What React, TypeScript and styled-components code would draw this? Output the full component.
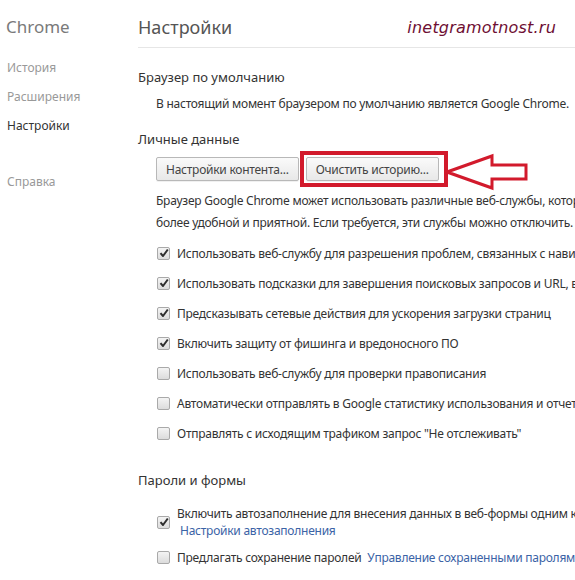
import React from 'react'
import styled, { createGlobalStyle } from 'styled-components'

const GlobalStyle = createGlobalStyle`
  html, body {
    margin: 0;
    padding: 0;
    background: #fff;
  }
  body {
    font-family: "Noto Sans", "Open Sans", sans-serif;
    color: #333;
  }
`

const Page = styled.div`
  display: grid;
  grid-template-columns: 138px 1fr;
  width: 575px;
  height: 580px;
  overflow: hidden;
  white-space: nowrap;
`

const Sidebar = styled.nav`
  display: flex;
  flex-direction: column;
  padding: 14px 0 0 6px;
`

const Brand = styled.div`
  font-size: 17px;
  line-height: 26px;
  color: #7a7a7a;
  margin-bottom: 13px;
`

const NavItem = styled.div<{ $active?: boolean; $gap?: number }>`
  font-size: 12px;
  line-height: 29px;
  padding-left: 1px;
  margin-top: ${p => p.$gap ?? 0}px;
  color: ${p => (p.$active ? '#333' : '#999')};
`

const Main = styled.main`
  display: flex;
  flex-direction: column;
  min-width: 0;
  letter-spacing: -0.25px;
`

const Header = styled.header`
  display: flex;
  align-items: center;
  height: 48px;
  border-bottom: 1px solid #e6e6e6;
  padding-top: 6px;
  box-sizing: border-box;
  letter-spacing: 0;
`

const Title = styled.h1`
  margin: 0;
  font-size: 18px;
  font-weight: normal;
  color: #555;
`

const Watermark = styled.span`
  margin: 2px 19px 0 auto;
  font-family: "DejaVu Sans", sans-serif;
  font-style: italic;
  font-size: 16px;
  letter-spacing: 0.2px;
  color: #6e0f33;
`

const SectionTitle = styled.h3<{ $top: number }>`
  margin: ${p => p.$top}px 0 0;
  font-size: 13px;
  font-weight: normal;
  line-height: 20px;
  letter-spacing: 0;
  color: #333;
`

const Text = styled.p<{ $top: number }>`
  margin: ${p => p.$top}px 0 0 18px;
  font-size: 12px;
  line-height: 20px;
`

const Para = styled.p`
  margin: 3px 0 0 18px;
  font-size: 12px;
  line-height: 22px;
`

const ButtonRow = styled.div`
  display: flex;
  align-items: center;
  margin: 2px 0 0 18px;
  height: 36px;
`

const Button = styled.button`
  height: 24px;
  padding: 0 9px;
  font-family: inherit;
  font-size: 12px;
  letter-spacing: inherit;
  color: #444;
  border: 1px solid #b8b8b8;
  border-radius: 2px;
  background: linear-gradient(#fafafa, #e8e8e8);
  box-shadow: 0 1px 0 rgba(0, 0, 0, 0.06);
`

const Highlight = styled.div`
  position: relative;
  display: flex;
  margin-left: 1px;
  padding: 2px 5px 2px 2px;
  border: 4px solid #d21a2c;
`

const Arrow = styled.svg`
  position: absolute;
  left: calc(100% + 1px);
  top: -4px;
`

const List = styled.div<{ $top: number }>`
  display: flex;
  flex-direction: column;
  margin: ${p => p.$top}px 0 0 19px;
`

const Row = styled.label<{ $tall?: boolean; $top?: number }>`
  display: flex;
  align-items: center;
  gap: 7px;
  height: ${p => (p.$tall ? 'auto' : '30px')};
  margin-top: ${p => p.$top ?? 0}px;
  font-size: 12px;
`

const Box = styled.span`
  flex: none;
  width: 11px;
  height: 11px;
  border: 1px solid #a9a9a9;
  border-radius: 2px;
  background: linear-gradient(#f4f4f4, #dcdcdc);
  display: flex;
  align-items: center;
  justify-content: center;
`

const Stack = styled.div`
  display: flex;
  flex-direction: column;
  line-height: 17px;
`

const Link = styled.a<{ $indent?: number }>`
  color: #3b63a6;
  text-decoration: none;
  margin-left: ${p => p.$indent ?? 0}px;
`

const Check = () => (
  <svg width="10" height="10" viewBox="0 0 10 10">
    <path d="M1.5 5.2 L4 8 L8.8 1.5" fill="none" stroke="#2e2e2e" strokeWidth="2" strokeLinejoin="round" />
  </svg>
)

const CheckBox = ({ checked }: { checked?: boolean }) => <Box>{checked && <Check />}</Box>

const options: [boolean, string][] = [
  [true, 'Использовать веб-службу для разрешения проблем, связанных с навигацией'],
  [true, 'Использовать подсказки для завершения поисковых запросов и URL, вводимых в адресную строку'],
  [true, 'Предсказывать сетевые действия для ускорения загрузки страниц'],
  [true, 'Включить защиту от фишинга и вредоносного ПО'],
  [false, 'Использовать веб-службу для проверки правописания'],
  [false, 'Автоматически отправлять в Google статистику использования и отчеты о сбоях'],
  [false, 'Отправлять с исходящим трафиком запрос "Не отслеживать"'],
]

const App = () => {
  return (
    <>
      <GlobalStyle />
      <Page>
        <Sidebar>
          <Brand>Chrome</Brand>
          <NavItem>История</NavItem>
          <NavItem>Расширения</NavItem>
          <NavItem $active>Настройки</NavItem>
          <NavItem $gap={27}>Справка</NavItem>
        </Sidebar>
        <Main>
          <Header>
            <Title>Настройки</Title>
            <Watermark>inetgramotnost.ru</Watermark>
          </Header>

          <SectionTitle $top={19}>Браузер по умолчанию</SectionTitle>
          <Text $top={7}>В настоящий момент браузером по умолчанию является Google Chrome.</Text>

          <SectionTitle $top={15}>Личные данные</SectionTitle>
          <ButtonRow>
            <Button>Настройки контента...</Button>
            <Highlight>
              <Button>Очистить историю...</Button>
              <Arrow width="84" height="40" viewBox="0 0 84 40">
                <path
                  d="M2 21 L47 5 L47 14 L81 14 L81 28 L47 28 L47 37 Z"
                  fill="#fff"
                  stroke="#d21a2c"
                  strokeWidth="3"
                  strokeLinejoin="miter"
                />
              </Arrow>
            </Highlight>
          </ButtonRow>
          <Para>
            Браузер Google Chrome может использовать различные веб-службы, которые делают работу
            <br />
            более удобной и приятной. Если требуется, эти службы можно отключить.
          </Para>

          <List $top={4}>
            {options.map(([checked, label]) => (
              <Row key={label}>
                <CheckBox checked={checked} />
                {label}
              </Row>
            ))}
          </List>

          <SectionTitle $top={22}>Пароли и формы</SectionTitle>
          <List $top={15}>
            <Row $tall>
              <CheckBox checked />
              <Stack>
                <span>Включить автозаполнение для внесения данных в веб-формы одним кликом</span>
                <Link $indent={3}>Настройки автозаполнения</Link>
              </Stack>
            </Row>
            <Row $top={3}>
              <CheckBox />
              <span>
                Предлагать сохранение паролей <Link $indent={3}>Управление сохраненными паролями</Link>
              </span>
            </Row>
          </List>
        </Main>
      </Page>
    </>
  )
}

export default App
